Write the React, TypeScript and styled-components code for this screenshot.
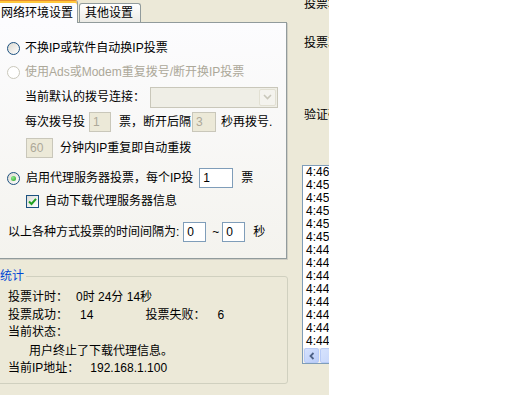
import React from 'react';
import styled, { createGlobalStyle, css } from 'styled-components';

const Global = createGlobalStyle`
  html, body {
    margin: 0;
    padding: 0;
    background: #ffffff;
  }
  body {
    font-family: "Liberation Sans", "Noto Sans CJK SC", sans-serif;
    font-size: 12px;
    color: #000000;
  }
`;

const Window = styled.div`
  display: flex;
  width: 329px;
  height: 395px;
  background: #ece9d8;
  overflow: hidden;
  line-height: 14px;
`;

const LeftCol = styled.div`
  flex: none;
  width: 290px;
  margin-left: -3px;
  display: flex;
  flex-direction: column;
`;

const TabStrip = styled.div`
  display: flex;
  align-items: flex-end;
  height: 22px;
  position: relative;
  z-index: 1;
`;

const Tab = styled.div<{ $active?: boolean }>`
  box-sizing: border-box;
  display: flex;
  align-items: center;
  border: 1px solid #919b9c;
  border-bottom: none;
  border-radius: 3px 3px 0 0;
  white-space: nowrap;
  ${(p) =>
    p.$active
      ? css`
          width: 81px;
          height: 23px;
          margin-bottom: -1px;
          padding: 1px 0 0 3px;
          background: #fcfcfe;
          border-top: 1px solid #e68b2c;
          box-shadow: inset 0 2px 0 #ffc83c;
        `
      : css`
          height: 19px;
          padding: 0 7px 0 5px;
          margin-left: 1px;
          background: linear-gradient(#ffffff, #ecebe6);
        `}
`;

const TabPanel = styled.div`
  box-sizing: border-box;
  height: 237px;
  border: 1px solid #919b9c;
  background: linear-gradient(#fcfcfe, #f4f3ee);
  box-shadow: 1px 1px 0 #d0cec4;
  padding: 15px 0 0 9px;
`;

const Row = styled.div<{ $mt?: number; $indent?: number; $disabled?: boolean }>`
  display: flex;
  align-items: center;
  height: 20px;
  margin-top: ${(p) => p.$mt ?? 0}px;
  padding-left: ${(p) => p.$indent ?? 0}px;
  color: ${(p) => (p.$disabled ? '#aca899' : '#000000')};
  white-space: nowrap;
`;

const Radio = styled.span<{ $checked?: boolean; $disabled?: boolean }>`
  box-sizing: border-box;
  flex: none;
  width: 13px;
  height: 13px;
  border-radius: 50%;
  margin-right: ${(p) => (p.$checked ? 6 : 5)}px;
  border: 1px solid ${(p) => (p.$disabled ? '#cac8bb' : '#1c5180')};
  background: ${(p) => (p.$disabled ? '#ffffff' : 'linear-gradient(135deg, #dcd9d0, #ffffff)')};
  display: flex;
  align-items: center;
  justify-content: center;

  &::after {
    content: '';
    display: ${(p) => (p.$checked ? 'block' : 'none')};
    width: 5px;
    height: 5px;
    border-radius: 50%;
    background: radial-gradient(circle at 35% 35%, #8fe98c, #21a121);
  }
`;

const CheckBox = styled.span`
  box-sizing: border-box;
  flex: none;
  width: 13px;
  height: 13px;
  margin-right: 6px;
  border: 1px solid #1c5180;
  background: linear-gradient(135deg, #dcdcd7, #ffffff);
  display: flex;
  align-items: center;
  justify-content: center;
`;

const TextBox = styled.input<{ $w: number; $ml?: number; $mr?: number }>`
  box-sizing: border-box;
  flex: none;
  width: ${(p) => p.$w}px;
  height: 20px;
  margin: 0 ${(p) => p.$mr ?? 0}px 0 ${(p) => p.$ml ?? 0}px;
  padding: 0 3px;
  border: 1px solid #7f9db9;
  background: #ffffff;
  color: #000000;
  font: inherit;
  outline: none;

  &:disabled {
    border-color: #c9c7ba;
    background: #ece9d8;
    color: #aca899;
  }
`;

const Combo = styled.div`
  box-sizing: border-box;
  width: 128px;
  height: 21px;
  margin-left: 5px;
  padding: 1px;
  border: 1px solid #c9c7ba;
  background: #efeee6;
  display: flex;
  justify-content: flex-end;
`;

const ComboButton = styled.span`
  box-sizing: border-box;
  width: 17px;
  height: 17px;
  border: 1px solid #e2e0d3;
  border-radius: 2px;
  background: #f4f3ee;
  display: flex;
  align-items: center;
  justify-content: center;
`;

const Group = styled.fieldset`
  box-sizing: border-box;
  width: 294px;
  min-width: 0;
  margin: 10px 0 0 -3px;
  padding: 6px 0 7px 13px;
  border: 1px solid #d0d0bf;
  border-radius: 3px;
`;

const Legend = styled.legend`
  margin-left: -8px;
  padding: 0 2px 0 0;
  color: #0046d5;
  line-height: 14px;
`;

const StatRow = styled.div<{ $mt?: number; $indent?: number }>`
  display: flex;
  align-items: center;
  height: 16px;
  margin-top: ${(p) => p.$mt ?? 0}px;
  padding-left: ${(p) => p.$indent ?? 0}px;
  white-space: nowrap;
`;

const Value = styled.span<{ $ml: number }>`
  margin-left: ${(p) => p.$ml}px;
`;

const RightCol = styled.div`
  flex: none;
  width: 90px;
  padding-left: 15px;
  display: flex;
  flex-direction: column;
`;

const SideLabel = styled.div<{ $mt: number }>`
  margin-top: ${(p) => p.$mt}px;
  padding-left: 2px;
  white-space: nowrap;
`;

const ListBox = styled.div`
  box-sizing: border-box;
  width: 80px;
  height: 199px;
  margin: 43px 0 0 0;
  border: 1px solid #7f9db9;
  background: #ffffff;
  display: flex;
  flex-direction: column;
`;

const ListItems = styled.div`
  flex: 1;
  overflow: hidden;
  padding-left: 3px;
  line-height: 13px;
`;

const HScroll = styled.div`
  flex: none;
  height: 15px;
  display: flex;
  gap: 1px;
  background: #f3f1ec;
  padding-left: 1px;
`;

const ScrollPart = styled.span<{ $w: number }>`
  box-sizing: border-box;
  flex: none;
  width: ${(p) => p.$w}px;
  height: 15px;
  border: 1px solid #b8cbf7;
  border-radius: 2px;
  background: linear-gradient(135deg, #d6e2fd, #b9ccf8);
  display: flex;
  align-items: center;
  justify-content: center;
`;

const logTimes = ['4:46:', '4:45:', '4:45:', '4:45:', '4:45:', '4:45:', '4:44:', '4:44:', '4:44:', '4:44:', '4:44:', '4:44:', '4:44:', '4:44:', '4:44:'];

const App = () => {
  return (
    <>
      <Global />
      <Window>
        <LeftCol>
          <TabStrip>
            <Tab $active>网络环境设置</Tab>
            <Tab>其他设置</Tab>
          </TabStrip>
          <TabPanel>
            <Row>
              <Radio />
              不换IP或软件自动换IP投票
            </Row>
            <Row $mt={4} $disabled>
              <Radio $disabled />
              使用Ads或Modem重复拨号/断开换IP投票
            </Row>
            <Row $mt={5} $indent={18}>
              当前默认的拨号连接：
              <Combo>
                <ComboButton>
                  <svg width="9" height="6" viewBox="0 0 9 6">
                    <path d="M1 1 L4.5 4.5 L8 1" fill="none" stroke="#c9c7ba" strokeWidth="1.6" />
                  </svg>
                </ComboButton>
              </Combo>
            </Row>
            <Row $mt={5} $indent={18}>
              每次拨号投
              <TextBox $w={22} $ml={4} $mr={8} value="1" disabled readOnly />
              票，断开后隔
              <TextBox $w={24} $ml={1} $mr={5} value="3" disabled readOnly />
              秒再拨号.
            </Row>
            <Row $mt={6} $indent={19}>
              <TextBox $w={27} $mr={7} value="60" disabled readOnly />
              分钟内IP重复即自动重拨
            </Row>
            <Row $mt={10}>
              <Radio $checked />
              启用代理服务器投票，每个IP投
              <TextBox $w={34} $ml={6} $mr={8} value="1" readOnly />
              票
            </Row>
            <Row $mt={3} $indent={19}>
              <CheckBox>
                <svg width="9" height="9" viewBox="0 0 9 9">
                  <path d="M1 4.5 L3.5 7 L8 1.8" fill="none" stroke="#21a121" strokeWidth="2" />
                </svg>
              </CheckBox>
              自动下载代理服务器信息
            </Row>
            <Row $mt={11} $indent={1}>
              以上各种方式投票的时间间隔为:
              <TextBox $w={23} $ml={4} $mr={6} value="0" readOnly />
              ~
              <TextBox $w={23} $ml={3} $mr={8} value="0" readOnly />
              秒
            </Row>
          </TabPanel>
          <Group>
            <Legend>统计</Legend>
            <StatRow>
              投票计时：<Value $ml={8}>0时 24分 14秒</Value>
            </StatRow>
            <StatRow $mt={2}>
              投票成功：<Value $ml={12}>14</Value>
              <Value $ml={52}>投票失败：</Value>
              <Value $ml={12}>6</Value>
            </StatRow>
            <StatRow $mt={1}>当前状态：</StatRow>
            <StatRow $mt={3} $indent={21}>
              用户终止了下载代理信息。
            </StatRow>
            <StatRow $mt={1}>
              当前IP地址：<Value $ml={11}>192.168.1.100</Value>
            </StatRow>
          </Group>
        </LeftCol>
        <RightCol>
          <SideLabel $mt={-3}>投票地址：</SideLabel>
          <SideLabel $mt={25}>投票次数：</SideLabel>
          <SideLabel $mt={58}>验证码：</SideLabel>
          <ListBox>
            <ListItems>
              {logTimes.map((t, i) => (
                <div key={i}>{t}</div>
              ))}
            </ListItems>
            <HScroll>
              <ScrollPart $w={15}>
                <svg width="6" height="8" viewBox="0 0 6 8">
                  <path d="M4.5 1 L1.5 4 L4.5 7" fill="none" stroke="#4d6185" strokeWidth="1.8" />
                </svg>
              </ScrollPart>
              <ScrollPart $w={40} />
            </HScroll>
          </ListBox>
        </RightCol>
      </Window>
    </>
  );
};

export default App;
